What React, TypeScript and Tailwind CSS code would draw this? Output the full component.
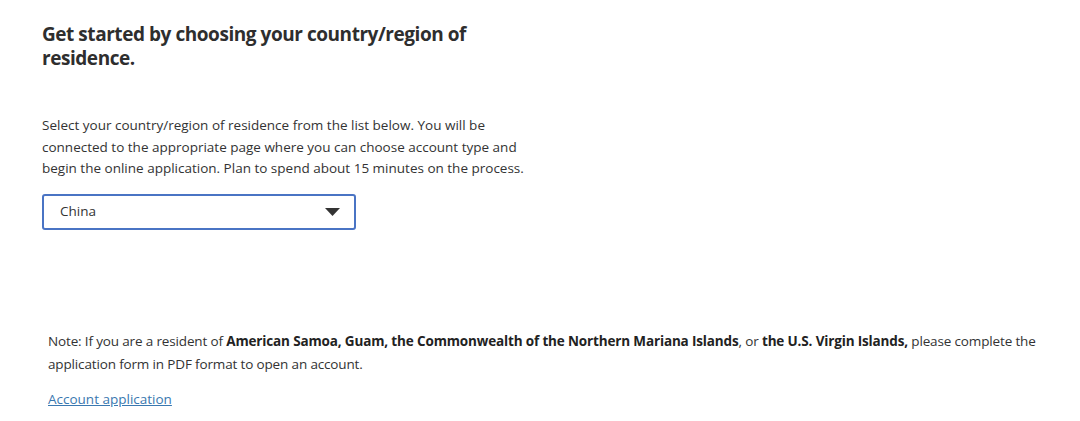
export default function App() {
  return (
    <div
      className="w-[1080px] h-[421px] bg-white text-[#333] overflow-hidden"
      style={{ fontFamily: '"Open Sans", "Liberation Sans", sans-serif' }}
    >
      <div className="pl-[42px] pt-[22px] w-[540px]">
        <h1 className="text-[19px] leading-[24px] font-bold text-[#2e2e2e] tracking-[-0.45px]">
          Get started by choosing your country/region of residence.
        </h1>
        <p className="mt-[45px] text-[13.5px] leading-[21.5px] w-[490px]">
          Select your country/region of residence from the list below. You will be connected to the
          appropriate page where you can choose account type and begin the online application. Plan
          to spend about 15 minutes on the process.
        </p>
        <div className="mt-[14px] w-[314px] h-[36px] border-2 border-[#4a74c4] rounded-[3px] flex items-center justify-between pl-[16px] pr-[14px]">
          <span className="text-[13.5px]">China</span>
          <svg width="15" height="8" viewBox="0 0 15 8">
            <path d="M0 0 H15 L7.5 8 Z" fill="#333" />
          </svg>
        </div>
      </div>
      <div className="pl-[48px] pr-[28px] mt-[100px]">
        <p className="text-[13.5px] leading-[23px] tracking-[-0.15px]">
          Note: If you are a resident of{' '}
          <b className="font-bold text-[#222]">
            American Samoa, Guam, the Commonwealth of the Northern Mariana Islands
          </b>
          , or <b className="font-bold text-[#222]">the U.S. Virgin Islands,</b> please complete the
          application form in PDF format to open an account.
        </p>
        <a href="#" className="inline-block mt-[13px] text-[13.5px] text-[#3a78b0] underline">
          Account application
        </a>
      </div>
    </div>
  )
}
